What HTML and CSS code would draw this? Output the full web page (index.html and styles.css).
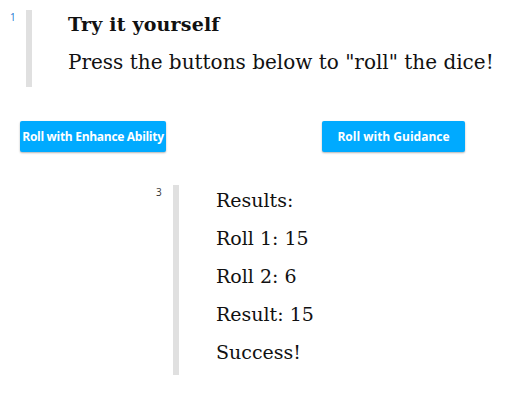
FILE: index.html
```html
<!DOCTYPE html>
<html>
<head>
<meta charset="utf-8">
<link rel="stylesheet" href="styles.css">
</head>
<body>
<div class="cell cell-intro">
  <div class="num">1</div>
  <div class="bar"></div>
  <div class="content">
    <h3 class="title">Try it yourself</h3>
    <p class="line">Press the buttons below to "roll" the dice!</p>
  </div>
</div>
<div class="buttons">
  <button class="btn btn-a">Roll with Enhance Ability</button>
  <button class="btn btn-b">Roll with Guidance</button>
</div>
<div class="cell cell-results">
  <div class="num num-dark">3</div>
  <div class="bar"></div>
  <div class="content results">
    <p class="rline">Results:</p>
    <p class="rline">Roll 1: 15</p>
    <p class="rline">Roll 2: 6</p>
    <p class="rline">Result: 15</p>
    <p class="rline">Success!</p>
  </div>
</div>
</body>
</html>
```
FILE: styles.css
```css
html, body { margin: 0; padding: 0; background: #fff; }
body { font-family: "DejaVu Serif", serif; color: #111; width: 530px; height: 405px; overflow: hidden; }

.cell { display: flex; align-items: stretch; }
.num { font-family: "Open Sans", "Liberation Sans", sans-serif; font-size: 10px; color: #1976d2; }
.num-dark { color: #333; }
.bar { width: 6px; background: #e0e0e0; }

.cell-intro { padding-top: 10px; }
.cell-intro .num { width: 16px; padding-left: 10px; line-height: 14px; }
.cell-intro .bar { height: 77px; }
.cell-intro .content { padding-left: 36px; }
.title { margin: 0; font-size: 19px; font-weight: bold; line-height: 26px; padding-top: 1px; letter-spacing: 0.2px; }
.line { margin: 0; font-size: 20px; line-height: 28px; padding-top: 11px; }

.buttons { display: flex; padding: 34px 0 0 20px; gap: 156px; }
.btn { font-family: "Open Sans", "Liberation Sans", sans-serif; font-weight: bold; font-size: 12px; letter-spacing: -0.3px; color: #fff; background: #00aaff; border: none; border-radius: 2px; height: 31px; padding: 0; box-shadow: 0 1px 2px rgba(0,0,0,0.3); white-space: nowrap; }
.btn-a { width: 146px; }
.btn-b { width: 143px; letter-spacing: 0; }

.cell-results { padding-top: 33px; }
.cell-results .num { width: 17px; padding-left: 156px; line-height: 14px; }
.cell-results .bar { height: 190px; }
.results { padding-left: 37px; margin-top: -4px; }
.rline { margin: 0; font-size: 19px; line-height: 38px; }
```
